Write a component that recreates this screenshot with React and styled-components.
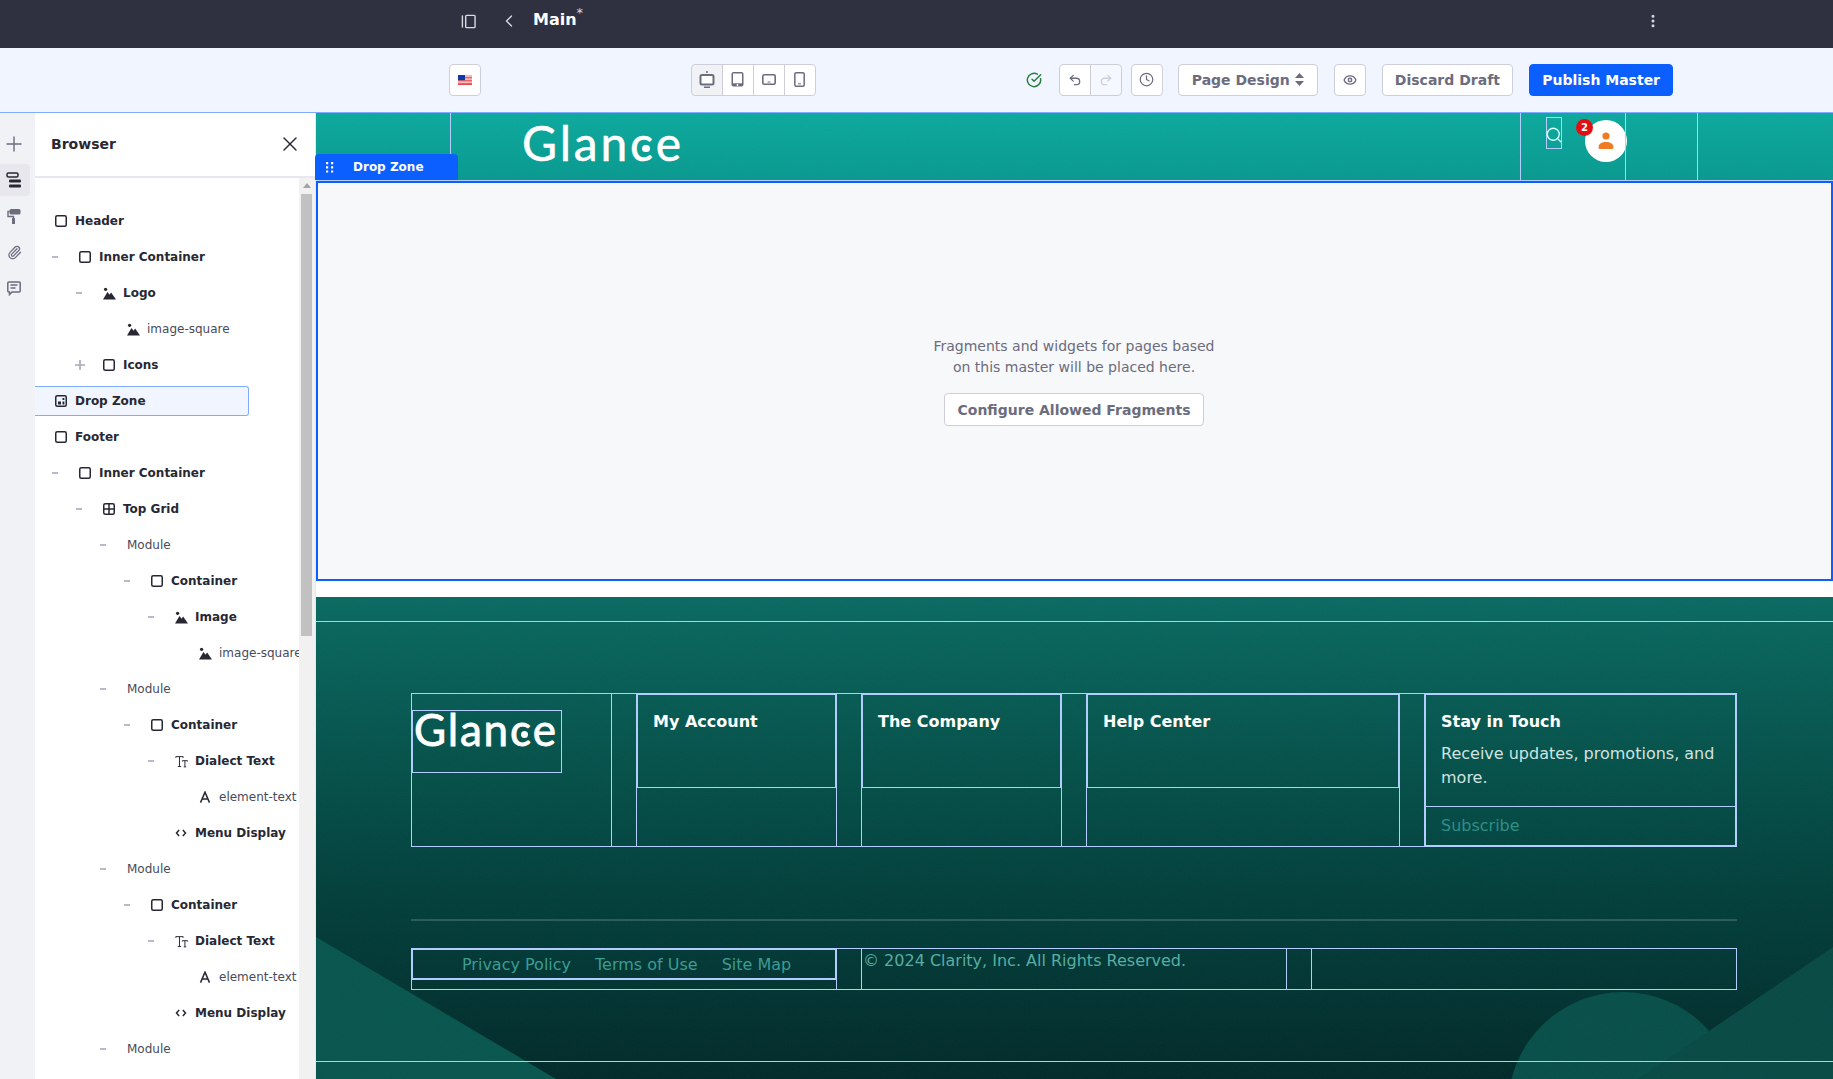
import React from 'react';
import styled, { createGlobalStyle } from 'styled-components';
import { ChevronLeft, EllipsisVertical, Paperclip, Plus, Undo2, Redo2, Clock, Eye, CircleCheckBig, Search, X } from 'lucide-react';

const colours = {
  ink: '#272833',
  gray: '#6b6c7e',
  line: '#cdced9',
  primary: '#0b5fff',
  frame: '#b3cdff',
};

const GlobalStyle = createGlobalStyle`
  html, body { margin: 0; padding: 0; height: 100%; overflow: hidden; background: #fff; }
  body { font-family: "DejaVu Sans", sans-serif; color: ${ colours.ink }; }
  * { box-sizing: border-box; }
`;

const Page = styled.div`
  display: flex;
  flex-direction: column;
  width: 1833px;
  height: 1079px;
  overflow: hidden;
`;

// Top bars
const TopBar = styled.header`
  display: flex;
  align-items: center;
  height: 48px;
  padding: 0 172px 6px 461px;
  background: #2f3140;
  color: #fff;
`;

const BackIcon = styled(ChevronLeft)`
  margin-left: 23px;
`;

const MoreIcon = styled(EllipsisVertical)`
  margin-left: auto;
`;

const PageTitle = styled.div`
  position: relative;
  margin: -2px 0 0 14px;
  font-size: 16px;
  font-weight: 700;
  line-height: 20px;

  sup {
    position: absolute;
    left: 100%;
    top: -7px;
    font-size: 13px;
    font-weight: 400;
    color: #d9dae3;
  }
`;

const Toolbar = styled.div`
  display: flex;
  align-items: center;
  height: 65px;
  padding: 0 160px 1px 449px;
  background: #f0f5ff;
  border-bottom: 1px solid #80acff;
`;

const ToolButton = styled.button`
  display: inline-flex;
  align-items: center;
  justify-content: center;
  gap: 5px;
  width: ${ props => props.$width || '32px' };
  height: 32px;
  margin-left: ${ props => props.$left || '0' };
  padding: 0;
  background: ${ props => props.$primary ? colours.primary : props.$active ? '#f1f2f5' : props.$muted ? '#f5f8ff' : '#fff' };
  border: 1px solid ${ props => props.$primary ? colours.primary : colours.line };
  border-radius: 4px;
  color: ${ props => props.$primary ? '#fff' : props.$muted ? '#cdced9' : colours.gray };
  font-family: inherit;
  font-size: 14px;
  font-weight: 700;
  white-space: nowrap;
`;

const ButtonGroup = styled.div`
  display: flex;
  margin-left: ${ props => props.$left };

  ${ ToolButton } {
    border-radius: 0;
    margin-left: -1px;
    width: 32px;
  }
  ${ ToolButton }:first-child {
    margin-left: 0;
    border-radius: 4px 0 0 4px;
  }
  ${ ToolButton }:last-child {
    border-radius: 0 4px 4px 0;
  }
`;

const Saved = styled.span`
  display: inline-flex;
  margin-left: 210px;
  color: #287d3c;
`;

// Workspace
const Workspace = styled.div`
  flex: 1;
  display: flex;
  min-height: 0;
`;

const NavRail = styled.nav`
  flex: 0 0 35px;
  display: flex;
  flex-direction: column;
  gap: 4px;
  padding-top: 15px;
  background: #f1f2f5;
`;

const NavItem = styled.div`
  display: flex;
  align-items: center;
  justify-content: center;
  width: 30px;
  height: 32px;
  padding-right: 2px;
  color: ${ props => props.$active ? colours.ink : colours.gray };
  background: ${ props => props.$active ? '#e7e7ed' : 'transparent' };
  border-radius: 0 4px 4px 0;
`;

const Panel = styled.aside`
  flex: 0 0 280px;
  display: flex;
  flex-direction: column;
  min-height: 0;
  background: #fff;
`;

const PanelHead = styled.div`
  flex: 0 0 65px;
  display: flex;
  align-items: center;
  justify-content: space-between;
  padding: 0 13px 2px 16px;
  border-bottom: 2px solid #e7e7ed;
  font-size: 14px;
  font-weight: 700;
`;

const PanelBody = styled.div`
  flex: 1;
  display: flex;
  min-height: 0;
`;

const Tree = styled.div`
  flex: 0 0 264px;
  padding-top: 28px;
  overflow: hidden;
`;

const Row = styled.div`
  display: flex;
  align-items: center;
  width: ${ props => props.$selected ? '214px' : '100%' };
  height: 30px;
  margin-bottom: 6px;
  padding-left: ${ props => 20 + props.$level * 24 }px;
  font-size: 12px;
  font-weight: ${ props => props.$bold ? 700 : 400 };
  color: ${ props => props.$bold ? colours.ink : '#494a59' };
  white-space: nowrap;
  background: ${ props => props.$selected ? '#f0f5ff' : 'transparent' };
  border: ${ props => props.$selected ? '1px solid #80acff' : '0' };
  border-left: 0;
  border-radius: 0 3px 3px 0;
`;

const Toggle = styled.span`
  display: flex;
  align-items: center;
  flex: 0 0 ${ props => props.$plus ? '29px' : '27px' };
  margin-left: ${ props => props.$plus ? '-29px' : '-27px' };
  color: #a7a9bc;
`;

const RowIcon = styled.span`
  display: flex;
  align-items: center;
  justify-content: center;
  flex: 0 0 12px;
  min-width: 0;
  margin-right: 8px;
  color: ${ colours.ink };

  svg {
    flex-shrink: 0;
  }
`;

const Scrollbar = styled.div`
  position: relative;
  flex: 0 0 16px;
  background: #f1f1f1;
  padding: 16px 3px 0 2px;

  &::before {
    content: "";
    position: absolute;
    top: 5px;
    left: 4px;
    border: 4px solid transparent;
    border-top: 0;
    border-bottom: 5px solid #a3a3a3;
  }
`;

const ScrollThumb = styled.div`
  height: 442px;
  background: #c1c1c1;
`;

// Canvas
const Canvas = styled.main`
  position: relative;
  flex: 1;
  display: flex;
  flex-direction: column;
  min-width: 0;
  border-left: 1px solid #e7e7ed;
`;

const GrainLayer = styled.svg`
  position: absolute;
  left: 0;
  top: 0;
  width: 100%;
  height: 100%;
  opacity: 0.035;
`;

const SiteHeader = styled.div`
  position: relative;
  flex: 0 0 68px;
  display: flex;
  padding-left: 134px;
  background: linear-gradient(180deg, #0ca99e 0%, #08998f 100%);
  border-bottom: 1px solid ${ colours.frame };
`;

const HeaderCell = styled.div`
  position: relative;
  display: flex;
  flex: ${ props => props.$width ? `0 0 ${ props.$width }` : '1' };
  min-width: 0;
  padding-left: ${ props => props.$pad || '0' };
  border-left: 1px solid ${ colours.frame };
`;

const LogoText = styled.div`
  margin-top: ${ props => props.$top || '0' };
  font-family: "Lato", sans-serif;
  font-size: ${ props => props.$size };
  font-weight: 400;
  letter-spacing: ${ props => props.$spacing };
  -webkit-text-stroke: ${ props => props.$stroke } #fff;
  line-height: 1;
  color: #fff;
  white-space: nowrap;
`;

const LogoC = styled.span`
  position: relative;

  &::after {
    content: "";
    position: absolute;
    left: 48%;
    top: 54%;
    width: 0.16em;
    height: 0.16em;
    border-radius: 50%;
    background: #fff;
  }
`;

const HeaderLogo = styled.div`
  margin-top: 6px;
`;

const SearchBox = styled.div`
  flex: 0 0 16px;
  min-width: 0;
  display: flex;
  justify-content: center;
  height: 32px;
  margin-top: 4px;
  padding-top: 8px;
  border: 1px solid ${ colours.frame };
  color: #d8fff8;

  svg {
    flex-shrink: 0;
  }
`;

const Avatar = styled.div`
  position: relative;
  flex: 0 0 42px;
  display: flex;
  align-items: center;
  justify-content: center;
  height: 42px;
  margin: 7px 0 0 23px;
  border-radius: 50%;
  background: #fff;
  color: #ee7b22;
`;

const Badge = styled.span`
  position: absolute;
  top: -1px;
  left: -9px;
  width: 17px;
  height: 17px;
  border-radius: 50%;
  background: #e00f14;
  color: #fff;
  font-size: 10px;
  font-weight: 700;
  line-height: 17px;
  text-align: center;
`;

const DropTab = styled.div`
  position: absolute;
  top: 41px;
  left: -1px;
  display: flex;
  align-items: center;
  gap: 19px;
  width: 143px;
  height: 26px;
  padding-left: 11px;
  border-radius: 4px 4px 0 0;
  background: ${ colours.primary };
  color: #fff;
  font-size: 12px;
  font-weight: 700;
`;

const DropArea = styled.section`
  flex: 0 0 400px;
  display: flex;
  flex-direction: column;
  align-items: center;
  justify-content: center;
  padding-right: 1px;
  background: #f7f8f9;
  border: 2px solid ${ colours.primary };
  color: ${ colours.gray };
  font-size: 14px;
  line-height: 21px;
  text-align: center;
`;

const ConfigureButton = styled(ToolButton)`
  width: 260px;
  height: 33px;
  margin: 15px 0 0;
  background: #fff;
`;

const Footer = styled.footer`
  position: relative;
  flex: 0 0 482px;
  margin-top: 16px;
  padding: 0 96px 0 95px;
  overflow: hidden;
  background: linear-gradient(180deg, #096a61 0%, #05534c 32%, #023f3b 62%, #012a2a 100%);
`;

const FooterShapes = styled.svg`
  position: absolute;
  left: 0;
  top: 0;
  width: 1517px;
  height: 482px;
`;

const FullLine = styled.div`
  position: absolute;
  left: 0;
  right: 0;
  top: ${ props => props.$top };
  height: 1px;
  background: #a9d4e6;
`;

const FooterContent = styled.div`
  position: relative;
  padding-top: 96px;
`;

const FooterGrid = styled.div`
  display: grid;
  grid-template-columns: ${ props => props.$columns };
  column-gap: 24px;
  height: ${ props => props.$height };
  border-top: 1px solid ${ colours.frame };
  border-bottom: 1px solid ${ colours.frame };
`;

const FooterCell = styled.div`
  display: flex;
  flex-direction: column;
  min-width: 0;
  border-left: 1px solid ${ colours.frame };
  border-right: 1px solid ${ colours.frame };
`;

const LogoBox = styled.div`
  width: 150px;
  height: 63px;
  margin-top: 16px;
  padding-left: 1px;
  border: 1px solid ${ colours.frame };
`;

const NavBlock = styled.div`
  height: 95px;
  margin: -1px -1px 0;
  padding: 15px 15px;
  border: solid ${ colours.frame };
  border-width: 2px 2px 1px 2px;
`;

const ColumnTitle = styled.h4`
  margin: 0;
  color: #fff;
  font-size: 16px;
  font-weight: 700;
  line-height: 24px;
`;

const TouchBlock = styled.div`
  flex: 1;
  display: flex;
  flex-direction: column;
  margin: -1px;
  border: 2px solid ${ colours.frame };
`;

const TouchText = styled.div`
  height: 112px;
  padding: 15px 14px 0 15px;
  border-bottom: 1px solid ${ colours.frame };
`;

const TouchCopy = styled.p`
  margin: 8px 0 0;
  color: #d0e3e0;
  font-size: 16px;
  line-height: 24px;
`;

const Subscribe = styled.a`
  padding: 7px 15px;
  color: #2f8f86;
  font-size: 16px;
  line-height: 24px;
`;

const Divider = styled.div`
  height: 2px;
  margin: 72px 0 27px;
  background: rgba(255, 255, 255, 0.16);
`;

const LegalLinks = styled.div`
  display: flex;
  gap: 24px;
  height: 32px;
  margin: -1px -1px 0;
  padding: 1px 0 0 49px;
  border: 2px solid ${ colours.frame };
  color: #3d9c92;
  font-size: 16px;
  line-height: 27px;
`;

const Copyright = styled.div`
  padding-left: 1px;
  color: #5aada3;
  font-size: 16px;
  line-height: 24px;
`;

// Icons
const Glyph = ({ size = 12, children, ...rest }) => (
  <svg width={ size } height={ size } viewBox="0 0 16 16" fill="none" stroke="currentColor" strokeWidth="2" { ...rest }>
    { children }
  </svg>
);

const SquareIcon = () => <Glyph><rect x="1" y="1" width="14" height="14" rx="2" /></Glyph>;
const GridIcon = () => <Glyph><rect x="1" y="1" width="14" height="14" rx="2" /><path d="M8 1v14M1 8h14" /></Glyph>;
const ZoneIcon = () => (
  <Glyph>
    <rect x="1" y="1" width="14" height="14" rx="2" />
    <path d="M4 8.5h4v4H4zM10 8.5h2.5v4H10zM10 4h2.5v2.5H10z" fill="currentColor" stroke="none" />
  </Glyph>
);
const ImageIcon = () => (
  <Glyph size={ 13 }>
    <circle cx="3.2" cy="2.8" r="2" fill="currentColor" stroke="none" />
    <path d="M0 15.5L5.5 6l2.6 3.6L10 6.8l6 8.7z" fill="currentColor" stroke="none" />
  </Glyph>
);
const DialectIcon = () => (
  <Glyph size={ 13 } strokeWidth="1.2">
    <path d="M1 3.5V2h9v1.5M5.5 2v12M3.5 14.2h4M9 8V7h6.5v1M12.2 7v7.5M10.8 14.6h3" />
  </Glyph>
);
const LetterIcon = () => <Glyph><path d="M2 15.5L8 1.5l6 14M4.5 10.5h7" /></Glyph>;
const CodeIcon = () => <Glyph><path d="M5.5 4L2 8l3.5 4M10.5 4L14 8l-3.5 4" /></Glyph>;

const rowIcons = {
  square: SquareIcon,
  grid: GridIcon,
  zone: ZoneIcon,
  image: ImageIcon,
  dialect: DialectIcon,
  letter: LetterIcon,
  code: CodeIcon,
};

const PanelToggleIcon = () => (
  <svg width="15" height="15" viewBox="0 0 16 16" fill="none" stroke="#d9dae3" strokeWidth="1.5">
    <path d="M1.5 1.5v13" />
    <rect x="5" y="1.5" width="10" height="13" rx="1" />
  </svg>
);

const FlagIcon = () => (
  <svg width="14" height="10" viewBox="0 0 14 10">
    <rect width="14" height="10" fill="#f6b8b8" />
    <path d="M0 8.2h14v1.8H0zM0 5.2h14v1H0zM6 2.3h8v1H6z" fill="#e8494d" />
    <rect width="7" height="5.2" fill="#0a3ba8" />
  </svg>
);

const DesktopIcon = () => (
  <svg width="16" height="18" viewBox="0 0 16 18" fill="none">
    <circle cx="8" cy="1" r="1" fill="#6b6c7e" />
    <rect x="1.5" y="4" width="13" height="9.5" rx="1.5" fill="#fff" stroke="#6b6c7e" strokeWidth="2" />
    <path d="M5 15.5h6v1.5H5z" fill="#6b6c7e" />
  </svg>
);

const TabletIcon = () => (
  <svg width="13" height="15" viewBox="0 0 13 15">
    <rect x="0.5" y="0" width="12" height="14.5" rx="2" fill="#6b6c7e" />
    <rect x="2" y="1.5" width="9" height="9.8" fill="#fff" />
    <circle cx="6.5" cy="13" r="0.9" fill="#fff" />
  </svg>
);

const LandscapeIcon = () => (
  <svg width="14" height="11" viewBox="0 0 14 11" fill="none">
    <rect x="0.8" y="0.8" width="12.4" height="9.4" rx="1.5" stroke="#6b6c7e" strokeWidth="1.6" />
    <path d="M5.5 7.5h3v1h-3z" fill="#6b6c7e" />
  </svg>
);

const PortraitIcon = () => (
  <svg width="11" height="15" viewBox="0 0 11 15" fill="none">
    <rect x="0.8" y="0.8" width="9.4" height="13.4" rx="1.5" stroke="#6b6c7e" strokeWidth="1.5" />
    <path d="M4 11.3h3v1H4z" fill="#6b6c7e" />
  </svg>
);

const CaretsIcon = () => (
  <svg width="9" height="13" viewBox="0 0 9 13" fill="currentColor">
    <path d="M4.5 0L9 5H0zM0 8h9l-4.5 5z" />
  </svg>
);

const StackIcon = () => (
  <svg width="16" height="16" viewBox="0 0 16 16" fill="none">
    <rect x="1" y="1" width="11" height="4" rx="1.5" stroke="currentColor" strokeWidth="1.5" />
    <rect x="3" y="7.5" width="12" height="3" rx="1" fill="currentColor" />
    <rect x="3" y="12.5" width="12" height="3" rx="1" fill="currentColor" />
  </svg>
);

const RollerIcon = () => (
  <svg width="14" height="15" viewBox="0 0 14 15" fill="none">
    <rect x="2.5" y="0" width="11" height="5.5" rx="1.5" fill="currentColor" />
    <path d="M2.5 2.5H1v5h5.5V10" stroke="currentColor" strokeWidth="1.4" />
    <rect x="5" y="9" width="3" height="6" rx="0.5" fill="currentColor" />
  </svg>
);

const CommentIcon = () => (
  <svg width="14" height="15" viewBox="0 0 14 15" fill="none" stroke="currentColor" strokeWidth="1.5">
    <path d="M1.8 1h10.4a1 1 0 0 1 1 1v8a1 1 0 0 1-1 1H5l-2.5 2.5V11h-.7a1 1 0 0 1-1-1V2a1 1 0 0 1 1-1z" />
    <path d="M3.5 4h7M3.5 7h5" />
  </svg>
);

const GripIcon = () => (
  <svg width="8" height="11" viewBox="0 0 8 11" fill="#fff">
    <path d="M0 0h2.2v2.2H0zM5 0h2.2v2.2H5zM0 4.2h2.2v2.2H0zM5 4.2h2.2v2.2H5zM0 8.4h2.2v2.2H0zM5 8.4h2.2v2.2H5z" />
  </svg>
);

const PersonIcon = () => (
  <svg width="16" height="18" viewBox="0 0 16 18" fill="currentColor">
    <circle cx="8" cy="4" r="3.6" />
    <path d="M0.5 15.5C0.5 11.5 4 10 8 10s7.5 1.5 7.5 5.5c0 1-1 1.5-2 1.5h-11c-1 0-2-.5-2-1.5z" />
  </svg>
);

const Grain = ({ id }) => (
  <GrainLayer aria-hidden="true">
    <filter id={ id }>
      <feTurbulence type="fractalNoise" baseFrequency="0.85" numOctaves="2" stitchTiles="stitch" />
      <feColorMatrix type="saturate" values="0" />
    </filter>
    <rect width="100%" height="100%" filter={ `url(#${ id })` } />
  </GrainLayer>
);

const Logo = ( props ) => (
  <LogoText { ...props }>Glan<LogoC>c</LogoC>e</LogoText>
);

// Tree data: [level, icon, label, toggle, plain]
const treeRows = [
  [ 0, 'square', 'Header', null ],
  [ 1, 'square', 'Inner Container', 'minus' ],
  [ 2, 'image', 'Logo', 'minus' ],
  [ 3, 'image', 'image-square', null, true ],
  [ 2, 'square', 'Icons', 'plus' ],
  [ 0, 'zone', 'Drop Zone', null ],
  [ 0, 'square', 'Footer', null ],
  [ 1, 'square', 'Inner Container', 'minus' ],
  [ 2, 'grid', 'Top Grid', 'minus' ],
  [ 3, null, 'Module', 'minus', true ],
  [ 4, 'square', 'Container', 'minus' ],
  [ 5, 'image', 'Image', 'minus' ],
  [ 6, 'image', 'image-square', null, true ],
  [ 3, null, 'Module', 'minus', true ],
  [ 4, 'square', 'Container', 'minus' ],
  [ 5, 'dialect', 'Dialect Text', 'minus' ],
  [ 6, 'letter', 'element-text', null, true ],
  [ 5, 'code', 'Menu Display', null ],
  [ 3, null, 'Module', 'minus', true ],
  [ 4, 'square', 'Container', 'minus' ],
  [ 5, 'dialect', 'Dialect Text', 'minus' ],
  [ 6, 'letter', 'element-text', null, true ],
  [ 5, 'code', 'Menu Display', null ],
  [ 3, null, 'Module', 'minus', true ],
];

const TreeRow = ({ level, icon, label, toggle, plain }) => {
  const Icon = rowIcons[ icon ];

  return (
    <Row $level={ level } $bold={ !plain } $selected={ label === 'Drop Zone' }>
      { toggle && (
        <Toggle $plus={ toggle === 'plus' }>
          <svg width="12" height="12" viewBox="0 0 12 12" fill="none" stroke="currentColor" strokeWidth="1.6">
            { toggle === 'plus'
              ? <path d="M1 6h10M6 1v10" />
              : <path d="M0 6h6" /> }
          </svg>
        </Toggle>
      ) }
      { Icon && <RowIcon><Icon /></RowIcon> }
      { label }
    </Row>
  );
};

export default function App() {
  return (
    <Page>
      <GlobalStyle />
      <TopBar>
        <PanelToggleIcon />
        <BackIcon size={ 20 } strokeWidth={ 1.6 } color="#d9dae3" />
        <PageTitle>Main<sup>*</sup></PageTitle>
        <MoreIcon size={ 16 } strokeWidth={ 2.5 } color="#d9dae3" />
      </TopBar>

      <Toolbar>
        <ToolButton><FlagIcon /></ToolButton>
        <ButtonGroup $left="210px">
          <ToolButton $active><DesktopIcon /></ToolButton>
          <ToolButton><TabletIcon /></ToolButton>
          <ToolButton><LandscapeIcon /></ToolButton>
          <ToolButton><PortraitIcon /></ToolButton>
        </ButtonGroup>
        <Saved><CircleCheckBig size={ 16 } strokeWidth={ 2.2 } /></Saved>
        <ButtonGroup $left="17px">
          <ToolButton><Undo2 size={ 14 } strokeWidth={ 2.2 } /></ToolButton>
          <ToolButton $muted><Redo2 size={ 14 } strokeWidth={ 2.2 } /></ToolButton>
        </ButtonGroup>
        <ToolButton $left="9px"><Clock size={ 15 } strokeWidth={ 2 } /></ToolButton>
        <ToolButton $left="15px" $width="140px">Page Design <CaretsIcon /></ToolButton>
        <ToolButton $left="16px"><Eye size={ 14 } strokeWidth={ 2.4 } /></ToolButton>
        <ToolButton $left="16px" $width="132px">Discard Draft</ToolButton>
        <ToolButton $left="16px" $width="144px" $primary>Publish Master</ToolButton>
      </Toolbar>

      <Workspace>
        <NavRail>
          <NavItem><Plus size={ 24 } strokeWidth={ 1.4 } /></NavItem>
          <NavItem $active><StackIcon /></NavItem>
          <NavItem><RollerIcon /></NavItem>
          <NavItem><Paperclip size={ 15 } strokeWidth={ 2 } /></NavItem>
          <NavItem><CommentIcon /></NavItem>
        </NavRail>

        <Panel>
          <PanelHead>
            Browser
            <X size={ 24 } strokeWidth={ 1.4 } />
          </PanelHead>
          <PanelBody>
            <Tree>
              { treeRows.map( ( [ level, icon, label, toggle, plain ], index ) => (
                <TreeRow
                  key={ index }
                  level={ level }
                  icon={ icon }
                  label={ label }
                  toggle={ toggle }
                  plain={ plain } />
              ) ) }
            </Tree>
            <Scrollbar><ScrollThumb /></Scrollbar>
          </PanelBody>
        </Panel>

        <Canvas>
          <SiteHeader>
            <Grain id="header-grain" />
            <HeaderCell $width="1070px" $pad="71px">
              <HeaderLogo>
                <Logo $size="48px" $spacing="2.8px" $stroke="0.5px" />
              </HeaderLogo>
            </HeaderCell>
            <HeaderCell $width="105px" $pad="25px">
              <SearchBox><Search size={ 18 } strokeWidth={ 1.8 } /></SearchBox>
              <Avatar>
                <PersonIcon />
                <Badge>2</Badge>
              </Avatar>
            </HeaderCell>
            <HeaderCell $width="72px" />
            <HeaderCell />
          </SiteHeader>

          <DropTab><GripIcon />Drop Zone</DropTab>

          <DropArea>
            Fragments and widgets for pages based<br />
            on this master will be placed here.
            <ConfigureButton as="button">Configure Allowed Fragments</ConfigureButton>
          </DropArea>

          <Footer>
            <FooterShapes viewBox="0 0 1517 482">
              <path d="M0 340L240 482H0z" fill="#08564e" />
              <circle cx="1307" cy="510" r="115" fill="#084f49" />
              <path d="M1517 350L1322 482H1517z" fill="#084a45" />
            </FooterShapes>
            <Grain id="footer-grain" />
            <FullLine $top="24px" />
            <FullLine $top="464px" />

            <FooterContent>
              <FooterGrid $columns="201px 201px 201px 314px 313px" $height="154px">
                <FooterCell>
                  <LogoBox><Logo $top="-4px" $size="44px" $spacing="1.8px" $stroke="0.8px" /></LogoBox>
                </FooterCell>
                <FooterCell><NavBlock><ColumnTitle>My Account</ColumnTitle></NavBlock></FooterCell>
                <FooterCell><NavBlock><ColumnTitle>The Company</ColumnTitle></NavBlock></FooterCell>
                <FooterCell><NavBlock><ColumnTitle>Help Center</ColumnTitle></NavBlock></FooterCell>
                <FooterCell>
                  <TouchBlock>
                    <TouchText>
                      <ColumnTitle>Stay in Touch</ColumnTitle>
                      <TouchCopy>Receive updates, promotions, and more.</TouchCopy>
                    </TouchText>
                    <Subscribe>Subscribe</Subscribe>
                  </TouchBlock>
                </FooterCell>
              </FooterGrid>

              <Divider />

              <FooterGrid $columns="426px 426px 426px" $height="42px">
                <FooterCell>
                  <LegalLinks>
                    <span>Privacy Policy</span>
                    <span>Terms of Use</span>
                    <span>Site Map</span>
                  </LegalLinks>
                </FooterCell>
                <FooterCell><Copyright>© 2024 Clarity, Inc. All Rights Reserved.</Copyright></FooterCell>
                <FooterCell />
              </FooterGrid>
            </FooterContent>
          </Footer>
        </Canvas>
      </Workspace>
    </Page>
  );
}
